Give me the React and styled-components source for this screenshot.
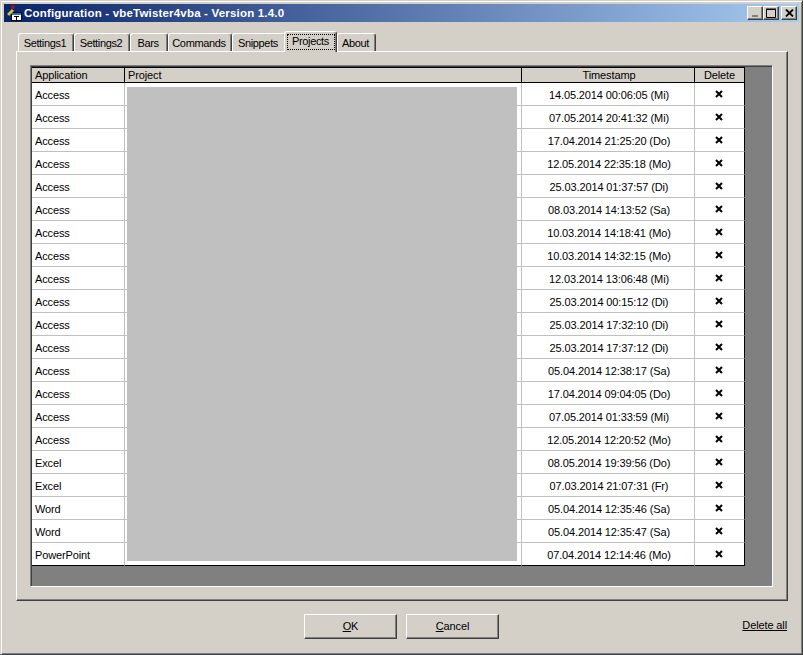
import React from 'react';
import styled, { createGlobalStyle } from 'styled-components';

const face = '#d4d0c8';

const rows = [
  ['Access', '14.05.2014 00:06:05 (Mi)'],
  ['Access', '07.05.2014 20:41:32 (Mi)'],
  ['Access', '17.04.2014 21:25:20 (Do)'],
  ['Access', '12.05.2014 22:35:18 (Mo)'],
  ['Access', '25.03.2014 01:37:57 (Di)'],
  ['Access', '08.03.2014 14:13:52 (Sa)'],
  ['Access', '10.03.2014 14:18:41 (Mo)'],
  ['Access', '10.03.2014 14:32:15 (Mo)'],
  ['Access', '12.03.2014 13:06:48 (Mi)'],
  ['Access', '25.03.2014 00:15:12 (Di)'],
  ['Access', '25.03.2014 17:32:10 (Di)'],
  ['Access', '25.03.2014 17:37:12 (Di)'],
  ['Access', '05.04.2014 12:38:17 (Sa)'],
  ['Access', '17.04.2014 09:04:05 (Do)'],
  ['Access', '07.05.2014 01:33:59 (Mi)'],
  ['Access', '12.05.2014 12:20:52 (Mo)'],
  ['Excel', '08.05.2014 19:39:56 (Do)'],
  ['Excel', '07.03.2014 21:07:31 (Fr)'],
  ['Word', '05.04.2014 12:35:46 (Sa)'],
  ['Word', '05.04.2014 12:35:47 (Sa)'],
  ['PowerPoint', '07.04.2014 12:14:46 (Mo)'],
];

const tabs = [
  { label: 'Settings1', width: 56 },
  { label: 'Settings2', width: 56 },
  { label: 'Bars', width: 38 },
  { label: 'Commands', width: 64 },
  { label: 'Snippets', width: 54 },
  { label: 'Projects', width: 53, active: true },
  { label: 'About', width: 39 },
];

const Global = createGlobalStyle`
  html, body { margin: 0; padding: 0; background: ${face}; }
  body { font: 11px "Liberation Sans", Arial, sans-serif; letter-spacing: -0.12px; color: #000; }
`;

const Window = styled.div`
  width: 803px;
  height: 655px;
  box-sizing: border-box;
  background: ${face};
  border: 1px solid;
  border-color: ${face} #404040 #404040 ${face};
  box-shadow: inset 1px 1px 0 #fff, inset -1px -1px 0 #808080;
  padding: 3px;
  display: flex;
  flex-direction: column;
`;

const TitleBar = styled.div`
  height: 18px;
  display: flex;
  align-items: center;
  padding: 0 2px;
  background: linear-gradient(90deg, #0a246a, #a6caf0);
  flex: none;
`;

const TitleText = styled.span`
  margin-left: 2px;
  color: #fff;
  font: bold 11.5px "Liberation Sans", Arial, sans-serif;
  letter-spacing: 0.19px;
  flex: 1;
  white-space: nowrap;
`;

const CaptionButton = styled.button`
  width: 16px;
  height: 14px;
  margin-left: ${({ $gap }) => ($gap ? '2px' : '0')};
  padding: 0;
  background: ${face};
  border: 1px solid;
  border-color: #fff #404040 #404040 #fff;
  box-shadow: inset -1px -1px 0 #808080;
  display: flex;
  align-items: center;
  justify-content: center;
  svg { display: block; }
`;

const Body = styled.div`
  flex: 1;
  padding: 9px 11px 0 12px;
  display: flex;
  flex-direction: column;
`;

const TabStrip = styled.div`
  display: flex;
  height: 20px;
  padding-left: 2px;
  align-items: flex-start;
  position: relative;
  z-index: 1;
`;

const Tab = styled.div`
  box-sizing: border-box;
  flex: none;
  width: ${({ $width }) => $width}px;
  height: ${({ $active }) => ($active ? '21px' : '18px')};
  margin-top: ${({ $active }) => ($active ? '0' : '2px')};
  margin-left: ${({ $active }) => ($active ? '-2px' : '0')};
  padding: ${({ $active }) => ($active ? '2px 1px 0 2px' : '3px 2px 0 0')};
  background: ${face};
  border-left: 1px solid #fff;
  border-top: 1px solid #fff;
  border-right: 1px solid #404040;
  border-radius: 3px 3px 0 0;
  box-shadow: inset -1px 0 0 #808080;
  white-space: nowrap;
  position: relative;
  z-index: ${({ $active }) => ($active ? 1 : 0)};
`;

const TabLabel = styled.div`
  box-sizing: border-box;
  height: ${({ $active }) => ($active ? '16px' : '13px')};
  line-height: 13px;
  padding-right: ${({ $active }) => ($active ? '1px' : '0')};
  text-align: center;
  letter-spacing: -0.35px;
  border: ${({ $active }) => ($active ? '1px dotted #000' : 'none')};
`;

const Panel = styled.div`
  width: 772px;
  height: 550px;
  box-sizing: border-box;
  border: 1px solid;
  border-color: #fff #404040 #404040 #fff;
  box-shadow: inset -1px -1px 0 #808080;
  padding: 13px 14px 13px 13px;
`;

const Grid = styled.div`
  height: 100%;
  box-sizing: border-box;
  background: #808080;
  border: 1px solid;
  border-color: #808080 #fff #fff #808080;
  box-shadow: inset 1px 1px 0 #404040;
  padding: 1px 0 0 1px;
  overflow: hidden;
`;

const Table = styled.div`
  width: 713px;
  display: grid;
  grid-template-columns: 93px 397px 173px 50px;
  position: relative;
`;

const HeadCell = styled.div`
  box-sizing: border-box;
  height: 16px;
  line-height: 15px;
  background: ${face};
  border-top: 1px solid #000;
  border-bottom: 1px solid #000;
  border-right: 1px solid #000;
  padding-left: ${({ $pad }) => $pad ?? 3}px;
  text-align: ${({ $center }) => ($center ? 'center' : 'left')};
  overflow: hidden;
`;

const Cell = styled.div`
  box-sizing: border-box;
  height: 23px;
  line-height: 24px;
  background: #fff;
  border-right: 1px solid ${({ $end }) => ($end ? '#000' : '#c0c0c0')};
  border-bottom: 1px solid ${({ $last }) => ($last ? '#000' : '#c0c0c0')};
  padding-left: ${({ $center }) => ($center ? '2px' : '3px')};
  text-align: ${({ $center }) => ($center ? 'center' : 'left')};
  white-space: nowrap;
`;

const IconCell = styled(Cell)`
  display: flex;
  align-items: center;
  justify-content: center;
  padding: 0 2px 0 0;
`;

const Redaction = styled.div`
  position: absolute;
  left: 95px;
  top: 20px;
  width: 390px;
  height: 474px;
  background: #c0c0c0;
`;

const Footer = styled.div`
  flex: 1;
  display: flex;
  align-items: flex-start;
  padding: 13px 0 0 288px;
  gap: 9px;
`;

const Button = styled.button`
  width: 93px;
  height: 25px;
  padding: 0 0 2px;
  background: ${face};
  border: 1px solid;
  border-color: #fff #404040 #404040 #fff;
  box-shadow: inset -1px -1px 0 #808080;
  font: inherit;
  letter-spacing: inherit;
  color: #000;
`;

const DeleteAll = styled.a`
  margin: 5px 1px 0 auto;
  color: #000;
  text-decoration: underline;
`;

const Key = styled.span`
  text-decoration: underline;
`;

const DeleteIcon = () => (
  <svg width="8" height="8" viewBox="0 0 8 8">
    <path d="M1 1 L7 7 M7 1 L1 7" stroke="#000" strokeWidth="2" fill="none" />
  </svg>
);

const AppIcon = () => (
  <svg width="16" height="16" viewBox="0 0 16 16">
    <rect x="5.500" y="7.500" width="10" height="8" fill="#fff" stroke="#000" />
    <rect x="6" y="8" width="9" height="2" fill="#2a6fc0" />
    <path d="M8 11h5v1H11v3h-1v-3H8z" fill="#000" />
    <circle cx="7" cy="2" r="2" fill="#a01010" />
    <path d="M1 9 L6 4 L8 6 L3 11 Z" fill="#d8c040" />
    <path d="M1 9 L3 11 L0 12 Z" fill="#303030" />
  </svg>
);

function App() {
  return (
    <Window>
      <Global />
      <TitleBar>
        <AppIcon />
        <TitleText>Configuration - vbeTwister4vba - Version 1.4.0</TitleText>
        <CaptionButton>
          <svg width="8" height="8" viewBox="0 0 8 8"><rect x="1" y="6" width="6" height="2" fill="#808080" /></svg>
        </CaptionButton>
        <CaptionButton>
          <svg width="10" height="10" viewBox="0 0 10 10"><path d="M0.500 1.500H9.500V9.500H0.500Z M0 1H10" stroke="#000" fill="none" /></svg>
        </CaptionButton>
        <CaptionButton $gap>
          <svg width="9" height="8" viewBox="0 0 9 8"><path d="M1 0.500 L8 7.500 M8 0.500 L1 7.500" stroke="#000" strokeWidth="1.800" fill="none" /></svg>
        </CaptionButton>
      </TitleBar>
      <Body>
        <TabStrip>
          {tabs.map((t) => (
            <Tab key={t.label} $width={t.width} $active={t.active}>
              <TabLabel $active={t.active}>{t.label}</TabLabel>
            </Tab>
          ))}
        </TabStrip>
        <Panel>
          <Grid>
            <Table>
              <HeadCell>Application</HeadCell>
              <HeadCell>Project</HeadCell>
              <HeadCell $center $pad={2}>Timestamp</HeadCell>
              <HeadCell $center $pad={0}>Delete</HeadCell>
              {rows.map(([app, stamp], i) => {
                const last = i === rows.length - 1;
                return (
                  <React.Fragment key={stamp + i}>
                    <Cell $last={last}>{app}</Cell>
                    <Cell $last={last} />
                    <Cell $last={last} $center>{stamp}</Cell>
                    <IconCell $last={last} $end><DeleteIcon /></IconCell>
                  </React.Fragment>
                );
              })}
              <Redaction />
            </Table>
          </Grid>
        </Panel>
        <Footer>
          <Button><Key>O</Key>K</Button>
          <Button><Key>C</Key>ancel</Button>
          <DeleteAll>Delete all</DeleteAll>
        </Footer>
      </Body>
    </Window>
  );
}

export default App;
